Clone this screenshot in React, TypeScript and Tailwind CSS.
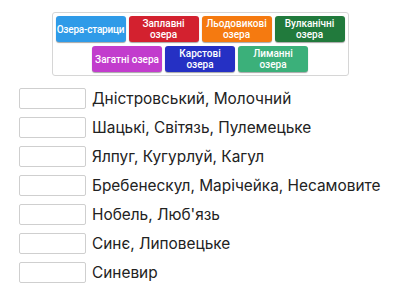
import React from "react";

const tiles1 = [
  { t: "Озера-старици", c: "bg-[#2f9be8] whitespace-nowrap tracking-[-0.2px]" },
  { t: "Заплавні озера", c: "bg-[#d3212f]" },
  { t: "Льодовикові озера", c: "bg-[#f57a10]" },
  { t: "Вулканічні озера", c: "bg-[#217a3c]" },
];
const tiles2 = [
  { t: "Загатні озера", c: "bg-[#c23ccd] whitespace-nowrap" },
  { t: "Карстові озера", c: "bg-[#2530c4]" },
  { t: "Лиманні озера", c: "bg-[#3bb07a]" },
];

const rows = [
  "Дністровський, Молочний",
  "Шацькі, Світязь, Пулемецьке",
  "Ялпуг, Кугурлуй, Кагул",
  "Бребенескул, Марічейка, Несамовите",
  "Нобель, Люб'язь",
  "Синє, Липовецьке",
  "Синевир",
];

function Tile({ t, c }: { t: string; c: string }) {
  return (
    <div
      className={`${c} w-[70px] h-[26px] rounded-[3px] flex items-center justify-center text-center text-white text-[10px] leading-[11px] font-medium px-[1px] shadow-[0_1px_1px_rgba(0,0,0,0.35)]`}
    >
      {t}
    </div>
  );
}

export default function App() {
  return (
    <div
      className="w-[400px] h-[300px] bg-white overflow-hidden"
      style={{ fontFamily: "Roboto, 'Noto Sans', sans-serif" }}
    >
      <div className="flex justify-center pt-[12px]">
        <div className="w-[297px] border border-[#d6d6d6] rounded-[3px] p-[3px] flex flex-col gap-[4px] items-center">
          <div className="flex gap-[3px]">
            {tiles1.map((x) => (
              <Tile key={x.t} {...x} />
            ))}
          </div>
          <div className="flex gap-[3px]">
            {tiles2.map((x) => (
              <Tile key={x.t} {...x} />
            ))}
          </div>
        </div>
      </div>
      <div className="flex flex-col gap-[8px] pl-[19px] pt-[12px]">
        {rows.map((r) => (
          <div key={r} className="flex items-center gap-[6px] h-[21px]">
            <div className="w-[67px] h-[21px] border border-[#cfcfcf] rounded-[2px] bg-white shrink-0" />
            <div
              className="text-[15.4px] text-[#222] whitespace-nowrap"
              style={{ fontFamily: "Inter, sans-serif" }}
            >
              {r}
            </div>
          </div>
        ))}
      </div>
    </div>
  );
}
